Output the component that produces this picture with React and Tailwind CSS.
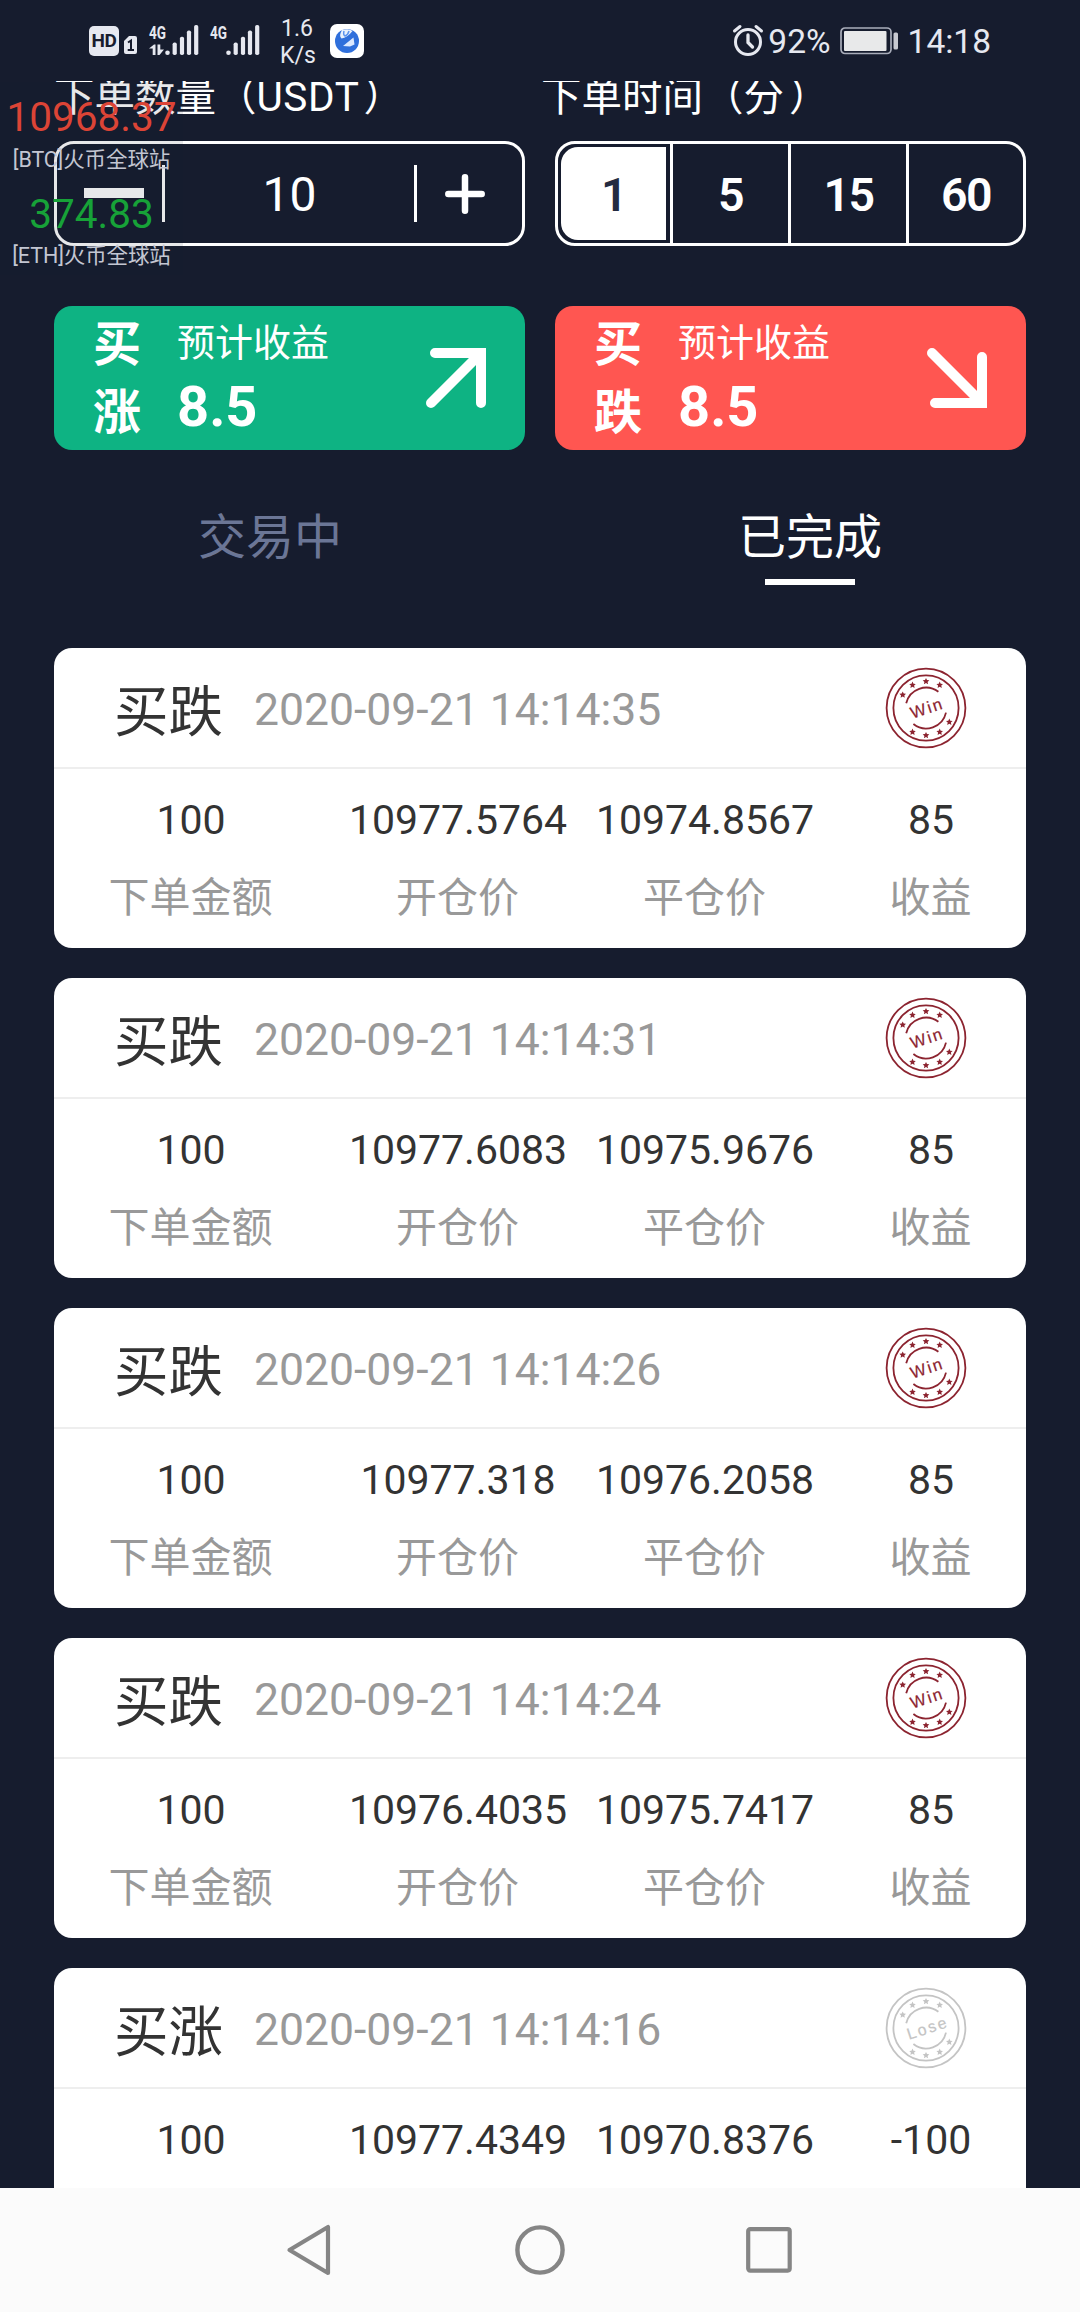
const orders = [
    { side: "买跌", time: "2020-09-21 14:14:35", amount: "100", open: "10977.5764", close: "10974.8567", profit: "85", win: true },
    { side: "买跌", time: "2020-09-21 14:14:31", amount: "100", open: "10977.6083", close: "10975.9676", profit: "85", win: true },
    { side: "买跌", time: "2020-09-21 14:14:26", amount: "100", open: "10977.318", close: "10976.2058", profit: "85", win: true },
    { side: "买跌", time: "2020-09-21 14:14:24", amount: "100", open: "10976.4035", close: "10975.7417", profit: "85", win: true },
    { side: "买涨", time: "2020-09-21 14:14:16", amount: "100", open: "10977.4349", close: "10970.8376", profit: "-100", win: false },
];

const STAR = "M0 -3.4L1 -1.2L3.3 -1L1.6 0.6L2.1 2.9L0 1.7L-2.1 2.9L-1.6 0.6L-3.3 -1L-1 -1.2Z";

const starSpots = [
    [-23.3, -13.2], [-13.5, -23], [0, -26.7], [13.7, -23],
    [23.3, 14], [13.7, 24], [0, 27.3], [-13.5, 24],
];

const Stamp = ({ win }) => {
    const color = win ? "#8c2430" : "#c4c4c4";
    return (
        <svg width="84" height="84" viewBox="-42 -42 84 84" fill="none" stroke={color} strokeWidth="1.8">
            <circle r="39.4" />
            <circle r="32.6" />
            <path d="M-19.8 -4.8A20.4 20.4 0 0 1 12.4 -16.2" />
            <path d="M20 4.6A20.4 20.4 0 0 1 -12.6 16" />
            {starSpots.map(([x, y]) => (
                <path key={`${x},${y}`} d={STAR} transform={`translate(${x} ${y})`} fill={color} stroke="none" />
            ))}
            <text
                transform="rotate(-18)"
                x={win ? 1 : 1.5}
                y="6"
                textAnchor="middle"
                fontSize={win ? 16.5 : 16}
                letterSpacing="2"
                fill={color}
                stroke={color}
                strokeWidth="0.2"
                className="font-['Liberation_Sans',sans-serif]"
            >
                {win ? "Win" : "Lose"}
            </text>
        </svg>
    );
};

const Signal = ({ data }) => (
    <svg width="51" height="32" viewBox="0 0 51 32" fill="#e6e8f0" overflow="visible" className="font-['Roboto',sans-serif]">
        <text x="0" y="14.5" fontSize="18.5" fontWeight="700" textLength="17" lengthAdjust="spacingAndGlyphs">4G</text>
        {data && (
            <path d="M0 24.5L5 20.5H6.500V31H3.700V24.500ZM8.500 20.500H11.300V25.500H15L10.500 31H8.500Z" />
        )}
        <circle cx="18.500" cy="28.700" r="2.300" />
        <rect x="23.600" y="18.500" width="4.200" height="12.500" rx="1.800" />
        <rect x="30.900" y="12.800" width="4.200" height="18.200" rx="1.800" />
        <rect x="37.900" y="6.500" width="4.200" height="24.500" rx="1.800" />
        <rect x="45.100" y="1" width="4.200" height="30" rx="1.800" />
    </svg>
);

const StatusBar = () => (
    <div className="h-[81px] shrink-0 flex items-start justify-between pl-[89px] pr-[90px] text-[#e6e8f0]">
        <div className="flex items-start">
            <div className="mt-[26px] w-[30px] h-[30px] rounded-[5px] bg-[#e6e8f0] text-[#171c2e] text-[19px] leading-[30px] font-bold text-center tracking-[-0.5px]">
                HD
            </div>
            <svg className="mt-[36px] ml-[5px]" width="13" height="18" viewBox="0 0 13 18">
                <path d="M5 0H11Q13 0 13 2V16Q13 18 11 18H2Q0 18 0 16V5Z" fill="#e6e8f0" />
                <path d="M4 6.500L7 4.500V14M3.700 14H10" fill="none" stroke="#171c2e" strokeWidth="2" />
            </svg>
            <div className="mt-[24px] ml-[12px] flex gap-[10px]">
                <Signal data />
                <Signal />
            </div>
            <div className="mt-[15px] ml-[19px] w-[34px] text-center text-[23px] leading-[27px]">
                <div>1.6</div>
                <div>K/s</div>
            </div>
            <div className="mt-[24px] ml-[16px] w-[34px] h-[34px] rounded-[7px] bg-white flex items-center justify-center">
                <svg width="26" height="26" viewBox="0 0 26 26">
                    <circle cx="13" cy="13" r="12" fill="#2f6fdb" />
                    <path d="M8 2Q4.500 8 7.500 10.500Q13 10 18.500 3Q15 0 8 2Z" fill="#fff" opacity="0.9" />
                    <path d="M9 18L19.500 9.500L20.500 16.500L16 18.500Z" fill="#dce9ff" />
                    <path d="M10 3Q9 7 11 8Q14 7 15 3" fill="none" stroke="#5b93ee" strokeWidth="1.500" />
                </svg>
            </div>
        </div>
        <div className="flex items-start text-[33.5px] leading-[40px]">
            <svg className="mt-[24px]" width="32" height="33" viewBox="0 0 32 33" fill="none" stroke="#e6e8f0" strokeWidth="3" strokeLinecap="round">
                <circle cx="16" cy="18" r="12.500" />
                <path d="M16 11V18.500L20.500 23" strokeWidth="3.300" />
                <path d="M2.500 7L8 2.500M29.500 7L24 2.500" />
            </svg>
            <span className="mt-[22px] ml-[4px]">92%</span>
            <svg className="mt-[27px] ml-[9px]" width="59" height="28" viewBox="0 0 59 28">
                <rect x="1" y="1" width="50" height="25.500" rx="4" fill="none" stroke="#a9adba" strokeWidth="1.700" />
                <rect x="4" y="4" width="42.500" height="20" rx="1" fill="#e8e9ea" />
                <rect x="53.500" y="5.500" width="4.500" height="17" rx="1.500" fill="#c8cad2" />
            </svg>
            <span className="mt-[22px] ml-[9px] -mr-px">14:18</span>
        </div>
    </div>
);

const PriceOverlay = () => (
    <div className="absolute left-0 top-[82px] w-[183px] h-[193px] bg-[#171c2e]/10 text-center text-[#c3c6d2] text-[21.5px]">
        <div className="pt-[11px] text-[40.5px] leading-[48px] text-[#dc4436]">10968.37</div>
        <div className="pt-[3px] leading-[32px] tracking-[-0.1px]">[BTC]火币全球站</div>
        <div className="pt-[14px] text-[40.5px] leading-[48px] text-[#17a238]">374.83</div>
        <div className="pt-[2px] leading-[32px] tracking-[-0.1px]">[ETH]火币全球站</div>
    </div>
);

const AmountInput = () => (
    <div className="w-[471px] h-[105px] rounded-[20px] border-[3px] border-white flex items-center">
        <div className="w-[105px] flex justify-center -mt-[1px]">
            <div className="w-[60px] h-[10px] ml-[9px] bg-white" />
        </div>
        <div className="w-[3px] h-[57px] bg-white" />
        <div className="flex-1 pt-[2px] text-center text-[48px] leading-[57px] text-white">10</div>
        <div className="w-[3px] h-[57px] bg-white" />
        <div className="w-[105px] flex justify-center">
            <svg className="-ml-[9px]" width="40" height="40" viewBox="0 0 40 40" stroke="#fff" strokeWidth="6.500" strokeLinecap="round">
                <path d="M20 3.300V36.700M3.300 20H36.700" />
            </svg>
        </div>
    </div>
);

const TimePicker = () => (
    <div className="w-[471px] h-[105px] rounded-[20px] border-[3px] border-white flex text-[46.5px] tracking-[-1.5px] leading-[102px] font-semibold text-center text-white">
        <div className="w-[115px] border-r-[3px] border-white p-[3px]">
            <div className="w-[105px] h-full leading-[96px] rounded-l-[17px] bg-white text-[#242b40]">1</div>
        </div>
        <div className="w-[118px] border-r-[3px] border-white">5</div>
        <div className="w-[118px] border-r-[3px] border-white">15</div>
        <div className="flex-1">60</div>
    </div>
);

const TradeButton = ({ chars, className, arrow }) => (
    <button className={`w-[471px] h-[144px] rounded-[18px] flex text-white text-left ${className}`}>
        <div className="ml-[39px] w-[48px] pt-[5px] text-[48px] leading-[68px] font-bold">
            {chars.map((c) => <div key={c}>{c}</div>)}
        </div>
        <div className="ml-[36px] flex-1">
            <div className="pt-[9px] text-[38px] leading-[56px]">预计收益</div>
            <div className="text-[56px] leading-[72px] font-bold">8.5</div>
        </div>
        <svg className="mt-[42px] mr-[39px]" width="60" height="60" viewBox="0 0 60 60" fill="none" stroke="#fff" strokeWidth="10" strokeLinecap="round">
            <path d={arrow} />
        </svg>
    </button>
);

const Cell = ({ value, label, className }) => (
    <div className={`text-center ${className}`}>
        <div className="text-[#333] leading-[48px]">{value}</div>
        <div className="mt-[30px] -ml-px text-[#999] leading-[48px]">{label}</div>
    </div>
);

const OrderCard = ({ order }) => (
    <div className="h-[300px] shrink-0 rounded-[18px] bg-white overflow-hidden">
        <div className="h-[121px] border-b-2 border-[#eee] flex items-center pl-[60px] pr-[58px]">
            <span className="text-[54.5px] leading-[64px] text-[#333] mt-[9px]">{order.side}</span>
            <span className="ml-[31px] flex-1 text-[44.5px] leading-[54px] text-[#999] mt-[5px]">{order.time}</span>
            <Stamp win={order.win} />
        </div>
        <div className="flex pt-[27px] text-[41px]">
            <Cell className="w-[288px] pr-[14px]" value={order.amount} label="下单金额" />
            <Cell className="w-[232px]" value={order.open} label="开仓价" />
            <Cell className="w-[262px]" value={order.close} label="平仓价" />
            <Cell className="w-[190px]" value={order.profit} label="收益" />
        </div>
    </div>
);

const NavBar = () => (
    <div className="h-[124px] shrink-0 bg-[#fbfbfb] flex items-start pt-[36px] pl-[286px]">
        <svg width="46" height="52" viewBox="0 0 46 52" fill="none" stroke="#858585" strokeWidth="4.200" strokeLinejoin="round">
            <path d="M42 3V49L3.500 26Z" />
        </svg>
        <svg className="ml-[182px]" width="52" height="52" viewBox="0 0 52 52" fill="none" stroke="#858585" strokeWidth="4.400">
            <circle cx="26" cy="26" r="22.600" />
        </svg>
        <svg className="ml-[179px]" width="48" height="52" viewBox="0 0 48 52" fill="none" stroke="#858585" strokeWidth="4.200">
            <rect x="3.200" y="5.100" width="41.500" height="41.500" rx="2" />
        </svg>
    </div>
);

const App = () => {
    return (
        <div className="relative w-[1080px] h-[2312px] overflow-hidden flex flex-col bg-[#161c2e] font-['Roboto','Noto_Sans_CJK_SC',sans-serif]">
            <StatusBar />

            <div className="flex-1 min-h-0 overflow-hidden flex flex-col px-[54px]">
                <div className="h-[60px] shrink-0 flex text-[40.5px] leading-[40px] text-white whitespace-nowrap">
                    <div className="w-[487px] -mt-[4px]">下单数量（<span className="tracking-[0.6px]">USDT</span><span className="ml-[4px]">）</span></div>
                    <div className="-mt-[4px]">下单时间（分<span className="ml-[5px]">）</span></div>
                </div>
                <div className="shrink-0 flex justify-between">
                    <AmountInput />
                    <TimePicker />
                </div>

                <div className="mt-[60px] shrink-0 flex justify-between">
                    <TradeButton chars={["买", "涨"]} className="bg-[#0eb383]" arrow="M9 5H55V55M55 5L5 55" />
                    <TradeButton chars={["买", "跌"]} className="bg-[#ff5651]" arrow="M8 55H55V9M55 55L5 5" />
                </div>

                {/* Tabs */}
                <div className="-mx-[54px] h-[198px] shrink-0 flex pt-[55px] text-[48px] leading-[66px] text-center">
                    <div className="flex-1 text-[#6b7696]">交易中</div>
                    <div className="flex-1 text-white flex flex-col items-center">
                        已完成
                        <div className="mt-[8px] w-[90px] h-[6px] bg-white" />
                    </div>
                </div>

                <div className="flex flex-col gap-[30px]">
                    {orders.map((order) => <OrderCard key={order.time} order={order} />)}
                </div>
            </div>

            <NavBar />
            <PriceOverlay />
        </div>
    );
};

export default App;
